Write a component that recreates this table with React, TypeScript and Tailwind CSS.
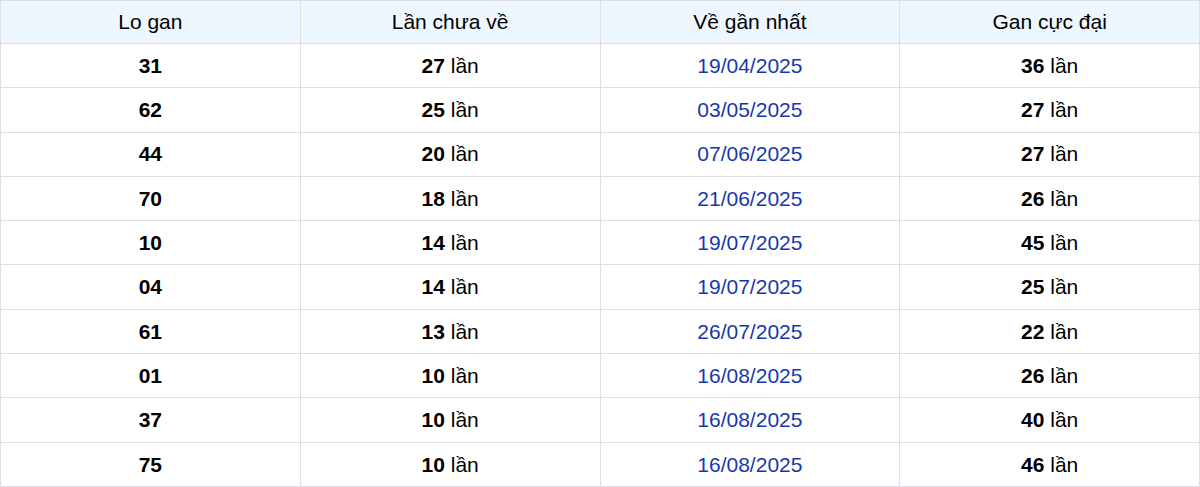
import React from "react";

const ROWS = [
  { lo: "31", chua: 27, ve: "19/04/2025", gan: 36 },
  { lo: "62", chua: 25, ve: "03/05/2025", gan: 27 },
  { lo: "44", chua: 20, ve: "07/06/2025", gan: 27 },
  { lo: "70", chua: 18, ve: "21/06/2025", gan: 26 },
  { lo: "10", chua: 14, ve: "19/07/2025", gan: 45 },
  { lo: "04", chua: 14, ve: "19/07/2025", gan: 25 },
  { lo: "61", chua: 13, ve: "26/07/2025", gan: 22 },
  { lo: "01", chua: 10, ve: "16/08/2025", gan: 26 },
  { lo: "37", chua: 10, ve: "16/08/2025", gan: 40 },
  { lo: "75", chua: 10, ve: "16/08/2025", gan: 46 },
];

const HEADERS = ["Lo gan", "Lần chưa về", "Về gần nhất", "Gan cực đại"];

export default function App() {
  return (
    <div className="w-[1200px] bg-white font-['Liberation_Sans',Arial,sans-serif] text-[21px] text-black">
      <table className="w-full table-fixed border-collapse">
        <thead>
          <tr className="h-[43px] bg-[#eef6ff]">
            {HEADERS.map((h) => (
              <th key={h} className="border-[1.4px] border-[#dedfe4] p-0 font-normal text-black">
                {h}
              </th>
            ))}
          </tr>
        </thead>
        <tbody>
          {ROWS.map((r, i) => (
            <tr key={i} className="h-[44.3px]">
              <td className="border-[1.4px] border-[#dedfe4] p-0 text-center font-bold">{r.lo}</td>
              <td className="border-[1.4px] border-[#dedfe4] p-0 text-center">
                <b>{r.chua}</b> lần
              </td>
              <td className="border-[1.4px] border-[#dedfe4] p-0 text-center text-[#1738ad]">{r.ve}</td>
              <td className="border-[1.4px] border-[#dedfe4] p-0 text-center">
                <b>{r.gan}</b> lần
              </td>
            </tr>
          ))}
        </tbody>
      </table>
    </div>
  );
}
